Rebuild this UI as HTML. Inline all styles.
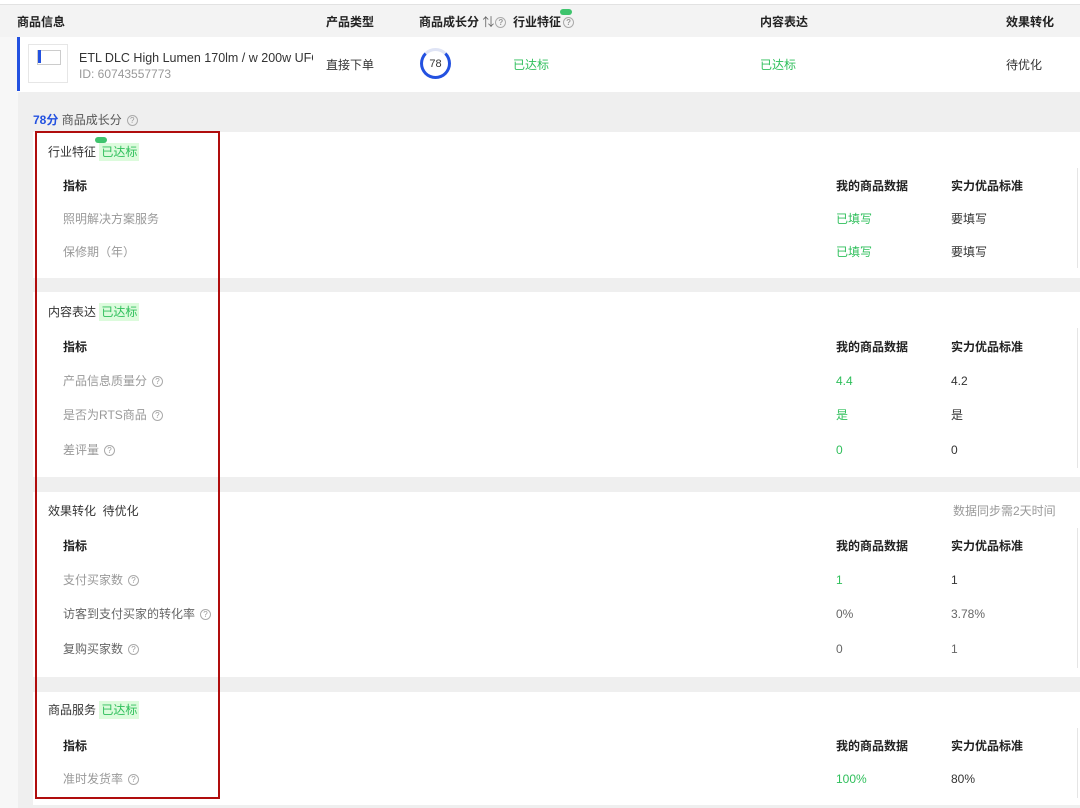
<!DOCTYPE html>
<html><head><meta charset="utf-8"><style>
*{margin:0;padding:0;box-sizing:border-box}
body{width:1080px;height:808px;overflow:hidden;background:#f7f7f7;font-family:"Liberation Sans","Noto Sans CJK SC",sans-serif;font-size:12px;color:#333;position:relative}
.a{position:absolute;white-space:nowrap;line-height:14px}
.b{font-weight:bold;color:#222}
.g{color:#999}
.gr{color:#2fbf5b}
.tag{background:#dcfbdc;color:#2fbf5b;padding:2px 2px}
.q{display:inline-block;width:11px;height:11px;border:1px solid #aaa;border-radius:50%;font-size:8px;line-height:9px;text-align:center;color:#999;vertical-align:1px;margin-left:5px}
.w{position:absolute;background:#fff;left:33px;width:1047px}
.vl{position:absolute;left:1077px;width:1px;background:#e5e5e5}
.new{position:absolute;width:12px;height:6px;background:#3ec46d;border-radius:3px}
</style></head><body>
<div style="position:absolute;left:0;top:0;width:1080px;height:5px;background:#fff;border-bottom:1px solid #e2e2e2"></div>
<div style="position:absolute;left:0;top:5px;width:1080px;height:32px;background:#f3f3f3"></div>
<div class="a b" style="left:17px;top:15px">商品信息</div>
<div class="a b" style="left:326px;top:15px">产品类型</div>
<div class="a b" style="left:419px;top:15px">商品成长分 <span style="font-weight:normal;color:#666">⇅</span><span class="q" style="margin-left:1px">?</span></div>
<div class="a b" style="left:513px;top:15px">行业特征<span class="q" style="margin-left:2px">?</span></div>
<div class="new" style="left:560px;top:9px"></div>
<div class="a b" style="left:760px;top:15px">内容表达</div>
<div class="a b" style="left:1006px;top:15px">效果转化</div>
<div style="position:absolute;left:17px;top:37px;width:1063px;height:55px;background:#fff"></div>
<div style="position:absolute;left:17px;top:37px;width:3px;height:54px;background:#2351e0"></div>
<div style="position:absolute;left:28px;top:44px;width:40px;height:39px;border:1px solid #e6e6e6;background:#fff"></div>
<div style="position:absolute;left:37px;top:50px;width:24px;height:15px;border:1px solid #ccc"></div>
<div style="position:absolute;left:38px;top:50px;width:3px;height:13px;background:#2351e0"></div>
<div class="a" style="left:79px;top:51px;font-size:12.5px;color:#333;width:234px;overflow:hidden">ETL DLC High Lumen 170lm / w 200w UFO I</div>
<div class="a g" style="left:79px;top:67px">ID: 60743557773</div>
<div class="a" style="left:326px;top:58px">直接下单</div>
<div style="position:absolute;left:420px;top:48px;width:31px;height:31px;border-radius:50%;border:3px solid #2351e0;border-top-color:#dfe4f5"></div>
<div class="a" style="left:420px;top:57px;width:31px;text-align:center;font-size:11px">78</div>
<div class="a gr" style="left:513px;top:58px">已达标</div>
<div class="a gr" style="left:760px;top:58px">已达标</div>
<div class="a" style="left:1006px;top:58px">待优化</div>
<div style="position:absolute;left:18px;top:92px;width:1062px;height:716px;background:#efefef"></div>
<div class="a" style="left:33px;top:113px"><span style="color:#2351e0;font-weight:bold">78分</span> <span style="color:#555">商品成长分</span><span class="q">?</span></div>
<div class="w" style="top:132px;height:146px"></div>
<div class="w" style="top:292px;height:185px"></div>
<div class="w" style="top:492px;height:185px"></div>
<div class="w" style="top:692px;height:113px"></div>
<div class="vl" style="top:168px;height:100px"></div>
<div class="vl" style="top:328px;height:140px"></div>
<div class="vl" style="top:528px;height:140px"></div>
<div class="vl" style="top:728px;height:70px"></div>
<div class="a" style="left:48px;top:145px">行业特征 <span class="tag">已达标</span></div>
<div class="new" style="left:95px;top:137px"></div>
<div class="a b" style="left:63px;top:179px">指标</div>
<div class="a b" style="left:836px;top:179px">我的商品数据</div>
<div class="a b" style="left:951px;top:179px">实力优品标准</div>
<div class="a g" style="left:63px;top:212px">照明解决方案服务</div>
<div class="a gr" style="left:836px;top:212px">已填写</div>
<div class="a" style="left:951px;top:212px">要填写</div>
<div class="a g" style="left:63px;top:245px">保修期（年）</div>
<div class="a gr" style="left:836px;top:245px">已填写</div>
<div class="a" style="left:951px;top:245px">要填写</div>
<div class="a" style="left:48px;top:305px">内容表达 <span class="tag">已达标</span></div>
<div class="a b" style="left:63px;top:340px">指标</div>
<div class="a b" style="left:836px;top:340px">我的商品数据</div>
<div class="a b" style="left:951px;top:340px">实力优品标准</div>
<div class="a g" style="left:63px;top:374px">产品信息质量分<span class="q">?</span></div>
<div class="a gr" style="left:836px;top:374px">4.4</div>
<div class="a" style="left:951px;top:374px">4.2</div>
<div class="a g" style="left:63px;top:408px">是否为RTS商品<span class="q">?</span></div>
<div class="a gr" style="left:836px;top:408px">是</div>
<div class="a" style="left:951px;top:408px">是</div>
<div class="a g" style="left:63px;top:443px">差评量<span class="q">?</span></div>
<div class="a gr" style="left:836px;top:443px">0</div>
<div class="a" style="left:951px;top:443px">0</div>
<div class="a" style="left:48px;top:504px">效果转化&nbsp; 待优化</div>
<div class="a g" style="left:953px;top:504px">数据同步需2天时间</div>
<div class="a b" style="left:63px;top:539px">指标</div>
<div class="a b" style="left:836px;top:539px">我的商品数据</div>
<div class="a b" style="left:951px;top:539px">实力优品标准</div>
<div class="a g" style="left:63px;top:573px">支付买家数<span class="q">?</span></div>
<div class="a gr" style="left:836px;top:573px">1</div>
<div class="a" style="left:951px;top:573px">1</div>
<div class="a" style="left:63px;top:607px;color:#666">访客到支付买家的转化率<span class="q">?</span></div>
<div class="a" style="left:836px;top:607px;color:#666">0%</div>
<div class="a" style="left:951px;top:607px;color:#666">3.78%</div>
<div class="a" style="left:63px;top:642px;color:#666">复购买家数<span class="q">?</span></div>
<div class="a" style="left:836px;top:642px;color:#666">0</div>
<div class="a" style="left:951px;top:642px;color:#666">1</div>
<div class="a" style="left:48px;top:703px">商品服务 <span class="tag">已达标</span></div>
<div class="a b" style="left:63px;top:739px">指标</div>
<div class="a b" style="left:836px;top:739px">我的商品数据</div>
<div class="a b" style="left:951px;top:739px">实力优品标准</div>
<div class="a g" style="left:63px;top:772px">准时发货率<span class="q">?</span></div>
<div class="a gr" style="left:836px;top:772px">100%</div>
<div class="a" style="left:951px;top:772px">80%</div>
<div style="position:absolute;left:35px;top:131px;width:185px;height:668px;border:2px solid #b00d0d"></div>
</body></html>
